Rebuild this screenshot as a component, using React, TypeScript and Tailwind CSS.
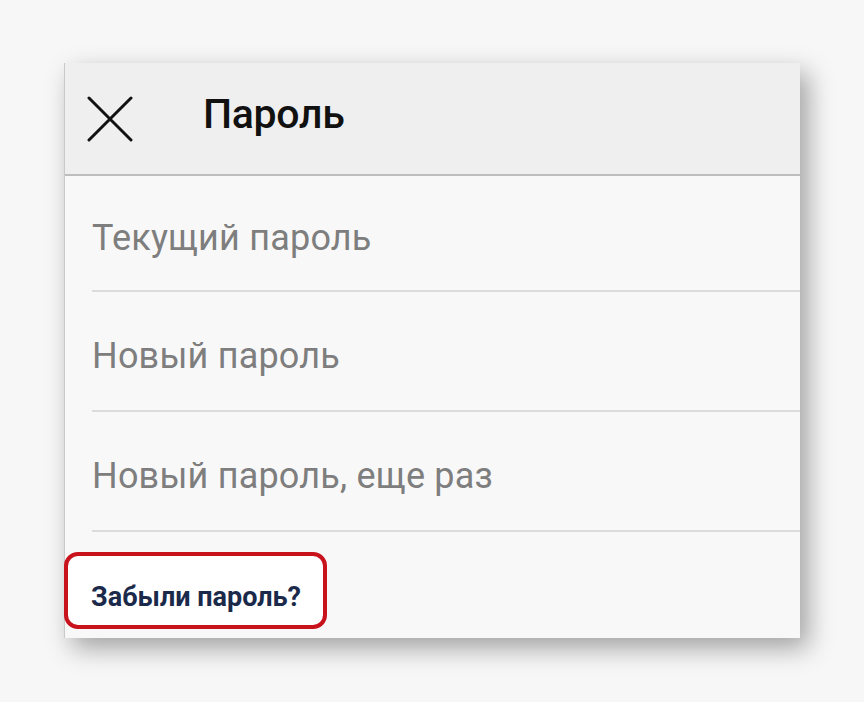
import React from 'react';

const fields = ['Текущий пароль', 'Новый пароль', 'Новый пароль, еще раз'];

const CloseIcon: React.FC = () => (
  <svg width="46" height="46" viewBox="0 0 46 46" fill="none">
    <path d="M2 2L44 44M44 2L2 44" stroke="#111" strokeWidth="3" strokeLinecap="round" />
  </svg>
);

const App: React.FC = () => {
  return (
    <div
      className="w-[864px] h-[702px] bg-[#f7f7f7] pt-[63px] pl-[64px]"
      style={{ fontFamily: 'Roboto, "Noto Sans", sans-serif' }}
    >
      <div className="w-[736px] bg-[#f9f8f8] border-l border-[#c9c9c9] shadow-[8px_10px_24px_rgba(0,0,0,0.35)]">
        <div className="h-[113px] bg-[#efefef] border-b-2 border-[#bdbdbd] flex items-center pl-[22px]">
          <CloseIcon />
          <h1 className="ml-[70px] mb-[8px] text-[41px] font-medium text-[#111] tracking-[-0.3px]">Пароль</h1>
        </div>
        {fields.map((label, i) => (
          <div key={label} className="pl-[27px]">
            <div
              className={`${i === 0 ? 'h-[116px]' : 'h-[120px]'} flex items-center pt-[10px] border-b-2 border-[#dcdcdc] text-[36px] tracking-[0.2px] text-[#7e7e7e]`}
            >
              {label}
            </div>
          </div>
        ))}
        <div className="h-[106px] flex items-center">
          <div className="ml-[-1px] mt-[10px] h-[77px] w-[263px] rounded-[14px] border-[4px] border-[#c8121c] flex items-center pl-[23px] pt-[14px] bg-white">
            <span className="text-[27px] font-bold text-[#1b2a4a]">Забыли пароль?</span>
          </div>
        </div>
      </div>
    </div>
  );
};

export default App;
